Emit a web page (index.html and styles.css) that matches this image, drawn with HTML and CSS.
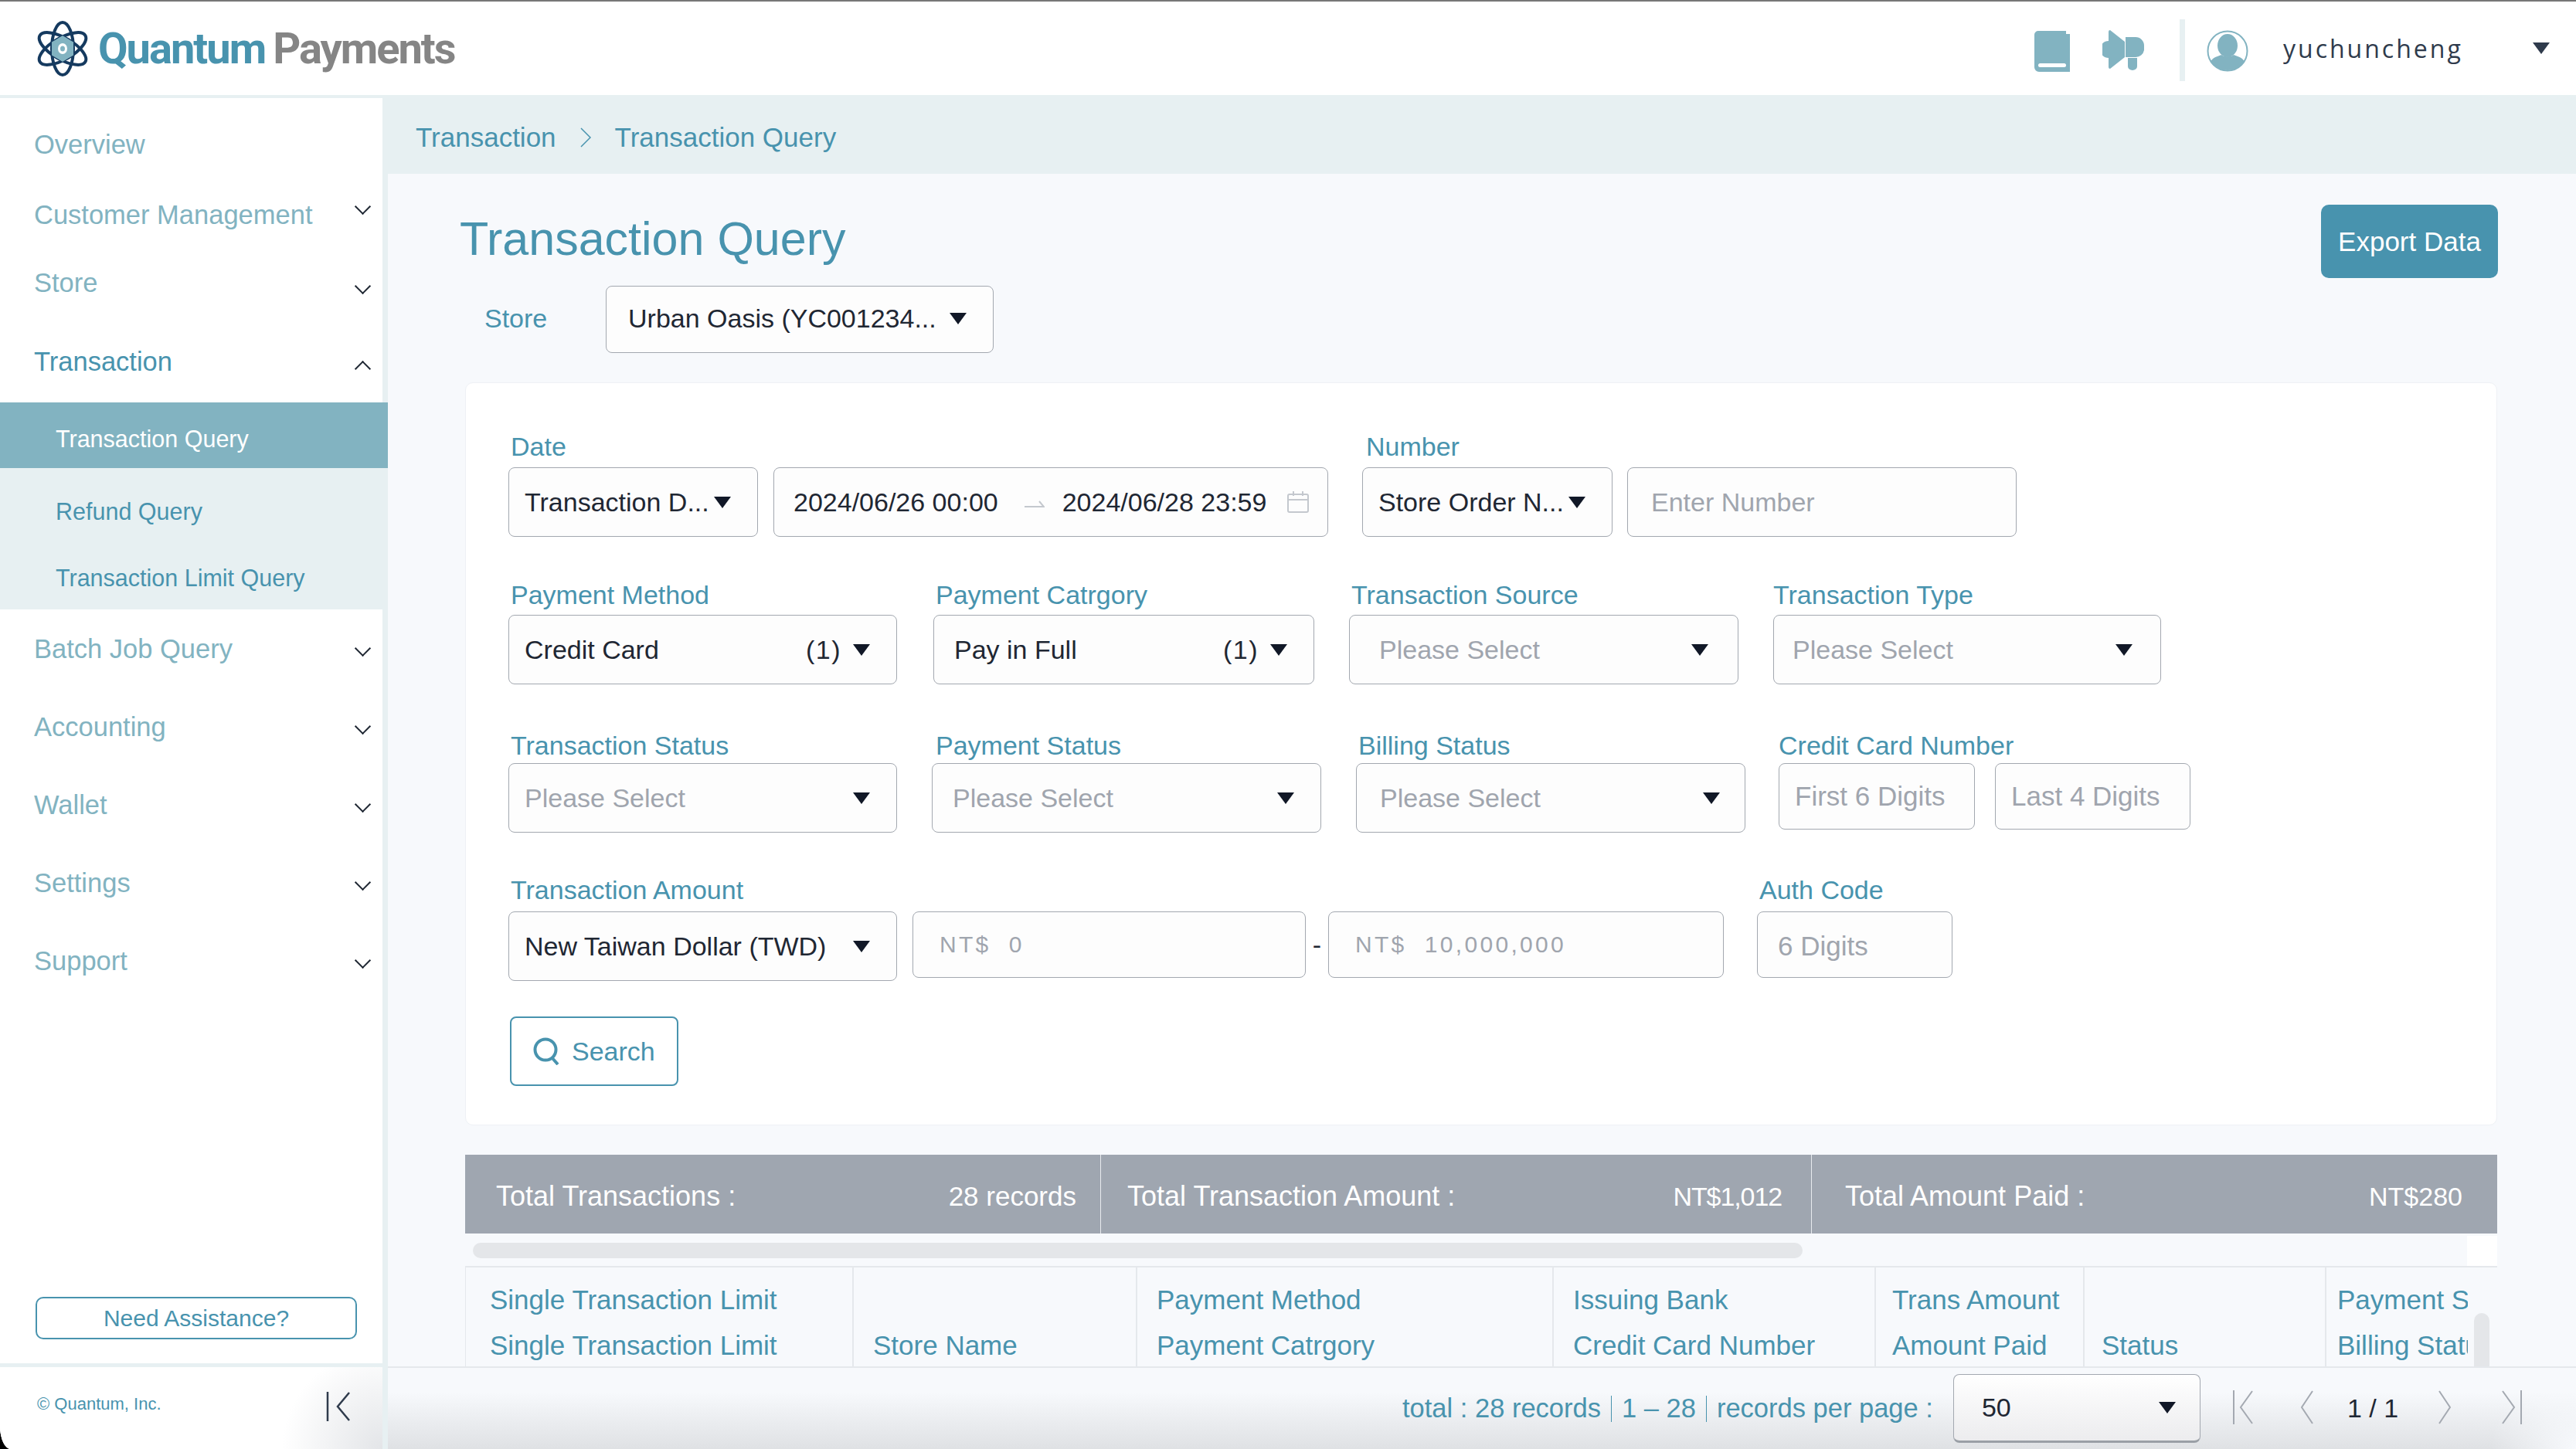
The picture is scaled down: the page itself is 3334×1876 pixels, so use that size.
FILE: index.html
```html
<!DOCTYPE html>
<html lang="en">
<head>
  <meta charset="UTF-8">
  <title>Quantum Payments - Transaction Query</title>
  <link rel="stylesheet" href="styles.css">
</head>
<body>
  <div class="app">

    <!-- top bar -->
    <header class="topbar">
      <div class="logo">
        <svg class="logo-mark" viewBox="0 0 68 74" fill="none">
          <g stroke="#153a5f" stroke-width="4">
            <ellipse cx="34" cy="37" rx="14" ry="34"/>
            <ellipse cx="34" cy="37" rx="14" ry="34" transform="rotate(60 34 37)"/>
            <ellipse cx="34" cy="37" rx="14" ry="34" transform="rotate(120 34 37)"/>
          </g>
          <path d="M34 20l14 8.500v17L34 54l-14-8.500v-17z" fill="#82b3c1"/>
          <ellipse cx="34" cy="37" rx="6" ry="7" fill="#fff"/>
          <ellipse cx="34" cy="37" rx="3" ry="3.500" fill="#82b3c1"/>
        </svg>
        <span class="logo-a">Quantum</span><span class="logo-b">Payments</span>
      </div>
      <div class="top-actions">
        <svg class="icon-book" viewBox="0 0 46 53">
          <path d="M5 0h36v39H9a5 5 0 0 0-5 5v1H0V5a5 5 0 0 1 5-5z" fill="#82b3c1"/>
          <path d="M43 4h3v49H6a6 6 0 0 1-6-6v-5a6 6 0 0 1 6-6h34v-32z" fill="#82b3c1"/>
          <rect x="5" y="42" width="36" height="5" rx="2.500" fill="#fff"/>
        </svg>
        <svg class="icon-horn" viewBox="0 0 54 52">
          <path d="M10 0l19 15v20L10 50a2 2 0 0 1-2-2V36A11 11 0 0 1 8 14V2a2 2 0 0 1 2-2z" fill="#82b3c1"/>
          <path d="M30 9h13a11 11 0 0 1 11 11v6a11 11 0 0 1-11 9H30z" fill="#82b3c1"/>
          <path d="M33 36h12v11a6 5 0 0 1-12 0z" fill="#82b3c1"/>
        </svg>
        <div class="top-divider"></div>
        <svg class="icon-user" viewBox="0 0 54 54" fill="none">
          <circle cx="27" cy="27" r="25.500" stroke="#82b3c1" stroke-width="2"/>
          <ellipse cx="27" cy="20" rx="13" ry="15" fill="#82b3c1"/>
          <path d="M5 41c3-6 9-7 14-9 3 3 13 3 16 0 5 2 11 3 14 9-5 7-13 11-22 11S10 48 5 41z" fill="#82b3c1"/>
        </svg>
        <span class="username">yuchuncheng</span>
        <span class="caret caret-user"></span>
      </div>
    </header>

    <!-- side menu -->
    <aside class="sidebar">
      <nav class="nav">
        <div class="nav-item nav-first">Overview</div>
        <div class="nav-item nav-customer">Customer Management<span class="chev chev-up-2"></span></div>
        <div class="nav-item nav-store">Store<span class="chev chev-down-2"></span></div>
        <div class="nav-item nav-open">Transaction<span class="chev chev-open"></span></div>
        <div class="subnav">
          <div class="sub-item sub-active">Transaction Query</div>
          <div class="sub-item">Refund Query</div>
          <div class="sub-item sub-last">Transaction Limit Query</div>
        </div>
        <div class="nav-item">Batch Job Query<span class="chev"></span></div>
        <div class="nav-item">Accounting<span class="chev"></span></div>
        <div class="nav-item">Wallet<span class="chev"></span></div>
        <div class="nav-item">Settings<span class="chev"></span></div>
        <div class="nav-item">Support<span class="chev"></span></div>
      </nav>
      <button class="help-btn">Need Assistance?</button>
      <div class="side-foot">
        <span class="copyright">© Quantum, Inc.</span>
        <svg class="icon-collapse" viewBox="0 0 32 38" fill="none" stroke="#2f3b4c" stroke-width="2.500">
          <path d="M2 0v38"/>
          <path d="M30 1L15 19l15 18"/>
        </svg>
      </div>
    </aside>

    <main class="main">
      <div class="breadcrumb">
        <span>Transaction</span>
        <svg class="crumb-sep" viewBox="0 0 16 26" fill="none" stroke="#4893ae" stroke-width="1.500"><path d="M2 1l12 12L2 25"/></svg>
        <span>Transaction Query</span>
      </div>

      <div class="content">
        <div class="title-row">
          <h1 class="title">Transaction Query</h1>
          <button class="export-btn">Export Data</button>
        </div>

        <div class="store-row">
          <span class="store-label">Store</span>
          <div class="ctl store-select"><span>Urban Oasis (YC001234...</span><span class="caret"></span></div>
        </div>

        <section class="filters">
          <div class="row row-1">
            <div class="field">
              <label>Date</label>
              <div class="pair pair-date">
                <div class="ctl w-323 tight"><span>Transaction D...</span><span class="caret"></span></div>
                <div class="ctl w-718 range">
                  <span>2024/06/26 00:00</span>
                  <svg class="range-arrow" viewBox="0 0 26 10" fill="none" stroke="#c4c8ce" stroke-width="2"><path d="M0 8h25L19 1"/></svg>
                  <span>2024/06/28 23:59</span>
                  <svg class="icon-cal" viewBox="0 0 28 28" fill="none" stroke="#c4c8ce" stroke-width="2">
                    <rect x="1" y="4" width="26" height="23" rx="2"/><path d="M1 11h26M8 0v6M20 0v6"/>
                  </svg>
                </div>
              </div>
            </div>
            <div class="field">
              <label class="wide">Number</label>
              <div class="pair pair-number">
                <div class="ctl w-324 tight"><span>Store Order N...</span><span class="caret"></span></div>
                <div class="ctl w-504 ph input-pad">Enter Number</div>
              </div>
            </div>
          </div>

          <div class="row row-2">
            <div class="field w-503"><label>Payment Method</label>
              <div class="ctl"><span>Credit Card</span><span class="count">(1)</span><span class="caret"></span></div></div>
            <div class="field w-493 nudge-2"><label>Payment Catrgory</label>
              <div class="ctl pad-26"><span>Pay in Full</span><span class="count">(1)</span><span class="caret"></span></div></div>
            <div class="field w-504"><label>Transaction Source</label>
              <div class="ctl ph pad-38"><span>Please Select</span><span class="caret"></span></div></div>
            <div class="field w-502"><label class="flush">Transaction Type</label>
              <div class="ctl ph pad-24"><span>Please Select</span><span class="caret"></span></div></div>
          </div>

          <div class="row row-3">
            <div class="field w-503"><label>Transaction Status</label>
              <div class="ctl ph"><span>Please Select</span><span class="caret"></span></div></div>
            <div class="field w-504"><label class="wide">Payment Status</label>
              <div class="ctl ph pad-26"><span>Please Select</span><span class="caret"></span></div></div>
            <div class="field w-504"><label>Billing Status</label>
              <div class="ctl ph pad-30"><span>Please Select</span><span class="caret"></span></div></div>
            <div class="field nudge-neg"><label class="flush">Credit Card Number</label>
              <div class="pair pair-card">
                <div class="ctl w-254 ph thin digits">First 6 Digits</div>
                <div class="ctl w-253 ph thin digits">Last 4 Digits</div>
              </div>
            </div>
          </div>

          <div class="row row-4">
            <div class="field"><label>Transaction Amount</label>
              <div class="pair pair-amount">
                <div class="ctl w-503"><span>New Taiwan Dollar (TWD)</span><span class="caret"></span></div>
                <div class="ctl w-509 ph amount thin">NT$&nbsp; 0</div>
                <span class="dash">-</span>
                <div class="ctl w-512 ph amount thin">NT$&nbsp; 10,000,000</div>
              </div>
            </div>
            <div class="field nudge-neg"><label>Auth Code</label>
              <div class="ctl w-253 ph thin digits auth">6 Digits</div></div>
          </div>

          <button class="search-btn">
            <svg class="icon-search" viewBox="0 0 34 36" fill="none" stroke="#4893ae" stroke-width="4">
              <circle cx="16" cy="16" r="13.500"/><path d="M24 26l8 9"/>
            </svg>
            Search
          </button>
        </section>

        <div class="stats">
          <div class="stat stat-1"><span class="stat-name">Total Transactions :</span><span class="stat-count">28 records</span></div>
          <div class="stat stat-2"><span class="stat-name">Total Transaction Amount :</span><span class="stat-small">NT$1,012</span></div>
          <div class="stat stat-3"><span class="stat-name">Total Amount Paid :</span><span>NT$280</span></div>
        </div>

        <div class="hscroll">
          <div class="hscroll-thumb"></div>
          <div class="hscroll-corner"></div>
        </div>

        <div class="table-wrap">
          <div class="table">
            <div class="th c1"><span>Single Transaction Limit</span><span>Single Transaction Limit</span></div>
            <div class="th c2"><span>&nbsp;</span><span>Store Name</span></div>
            <div class="th c3"><span>Payment Method</span><span>Payment Catrgory</span></div>
            <div class="th c4"><span>Issuing Bank</span><span>Credit Card Number</span></div>
            <div class="th c5"><span>Trans Amount</span><span>Amount Paid</span></div>
            <div class="th c6"><span>&nbsp;</span><span>Status</span></div>
            <div class="th c7"><span>Payment Status</span><span>Billing Status</span></div>
          </div>
          <div class="vscroll"></div>
        </div>
      </div>

      <footer class="pager">
        <span class="pager-text">total : 28 records</span><span class="pager-bar"></span>
        <span class="pager-text">1 – 28</span><span class="pager-bar"></span>
        <span class="pager-text">records per page :</span>
        <div class="ctl page-size"><span>50</span><span class="caret"></span></div>
        <svg class="pg pg-edge" viewBox="0 0 26 44" fill="none" stroke="#a4a9b1" stroke-width="2"><path d="M1 0v44M25 1L10 22l15 21"/></svg>
        <svg class="pg pg-arrow" viewBox="0 0 16 44" fill="none" stroke="#a4a9b1" stroke-width="2"><path d="M15 1L1 22l14 21"/></svg>
        <span class="pg-count">1 / 1</span>
        <svg class="pg pg-arrow" viewBox="0 0 16 44" fill="none" stroke="#a4a9b1" stroke-width="2"><path d="M1 1l14 21L1 43"/></svg>
        <svg class="pg pg-edge pg-last" viewBox="0 0 26 44" fill="none" stroke="#a4a9b1" stroke-width="2"><path d="M25 0v44M1 1l15 21L1 43"/></svg>
      </footer>
    </main>
  </div>
</body>
</html>
```

FILE: styles.css
```css
* {
  box-sizing: border-box;
}
html, body {
  margin: 0;
  height: 100%;
  background: #000;
}
body {
  font-family: "Liberation Sans", Arial, sans-serif;
  font-size: 34px;
  color: #1f2733;
  overflow: hidden;
}
.app {
  width: 3334px;
  height: 1876px;
  display: grid;
  grid-template-columns: 502px 1fr;
  grid-template-rows: 123px 1fr;
  background: #f7f9fc;
  border-bottom-left-radius: 14px 30px;
  overflow: hidden;
}

/* top bar */
.topbar {
  grid-column: 1 / 3;
  display: flex;
  align-items: center;
  justify-content: space-between;
  background: #fff;
  border-top: 2px solid #777;
}
.logo {
  display: flex;
  align-items: center;
  padding-left: 47px;
  font-family: Roboto, sans-serif;
  font-weight: 700;
  font-size: 56px;
  letter-spacing: -2px;
}
.logo-mark {
  width: 68px;
  height: 74px;
  margin-right: 12px;
}
.logo-a {
  color: #4893ae;
  margin-right: 10px;
}
.logo-b {
  color: #858585;
}
.top-actions {
  display: flex;
  align-items: center;
}
.icon-book {
  width: 46px;
  height: 53px;
  margin-top: 8px;
}
.icon-horn {
  width: 54px;
  height: 52px;
  margin-left: 42px;
  margin-top: 5px;
}
.top-divider {
  width: 7px;
  height: 80px;
  background: #e7f0f2;
  margin: 4px 28px 0 46px;
}
.icon-user {
  width: 54px;
  height: 54px;
  margin-top: 7px;
}
.username {
  font-family: "Open Sans", sans-serif;
  font-size: 32px;
  letter-spacing: 3px;
  color: #2f3b4c;
  margin-left: 45px;
  width: 323px;
}
.caret {
  flex: none;
  width: 0;
  height: 0;
  border-left: 11px solid transparent;
  border-right: 11px solid transparent;
  border-top: 15px solid #111827;
}
.caret-user {
  border-top-color: #2f3b4c;
  margin-right: 34px;
}

/* side menu */
.sidebar {
  display: flex;
  flex-direction: column;
  background: #fff;
  border-top: 4px solid #e7f0f2;
  border-right: 7px solid #e7f0f2;
}
.nav {
  flex: 1;
  padding-top: 12px;
  font-size: 34.500px;
}
.nav-item {
  display: flex;
  align-items: center;
  justify-content: space-between;
  height: 101px;
  padding: 0 15px 0 44px;
  color: #82b3c1;
}
.nav-first {
  height: 94px;
  padding-top: 3px;
}
.nav-customer {
  height: 90px;
}
.nav-store {
  height: 86px;
}
.nav-open {
  height: 112px;
  padding-top: 6px;
  color: #4893ae;
}
.chev {
  width: 15px;
  height: 15px;
  margin-right: 3px;
  margin-top: -2px;
  border-right: 2px solid #1f2733;
  border-bottom: 2px solid #1f2733;
  transform: rotate(45deg);
}
.chev-up-2 {
  margin-top: -22px;
}
.chev-down-2 {
  margin-top: 8px;
}
.chev-open {
  transform: rotate(225deg);
  margin-top: 18px;
}
.subnav {
  height: 268px;
  margin-right: -7px;
  margin-bottom: 1px;
  background: #e7f0f2;
  position: relative;
}
.sub-item {
  display: flex;
  align-items: center;
  height: 90px;
  padding-left: 72px;
  font-size: 30.500px;
  color: #4893ae;
}
.sub-active {
  height: 85px;
  margin-bottom: 11px;
  padding-top: 10px;
  background: #82b3c1;
  color: #fff;
}
.sub-last {
  height: 82px;
}
.help-btn {
  width: 416px;
  height: 55px;
  margin: 0 0 31px 46px;
  background: #fff;
  border: 2px solid #4893ae;
  border-radius: 10px;
  color: #4893ae;
  font: inherit;
  font-size: 30px;
}
.side-foot {
  display: flex;
  align-items: center;
  justify-content: space-between;
  height: 111px;
  padding: 0 41px 10px 48px;
  border-top: 5px solid #e7f0f2;
  background: radial-gradient(circle at 100% 100%, #e3e5e8 0, #fff 130px);
}
.copyright {
  font-size: 22px;
  color: #4893ae;
}
.icon-collapse {
  width: 32px;
  height: 38px;
  margin-top: 6px;
}

/* main column */
.main {
  display: flex;
  flex-direction: column;
  min-height: 0;
}
.breadcrumb {
  display: flex;
  align-items: center;
  flex: none;
  height: 102px;
  padding: 7px 0 0 36px;
  background: #e7f0f2;
  color: #4893ae;
  font-size: 35px;
}
.crumb-sep {
  width: 16px;
  height: 26px;
  margin: 0 30px;
}
.content {
  flex: 1;
  min-height: 0;
  overflow: hidden;
  padding: 40px 102px 0 100px;
}
.title-row {
  display: flex;
  align-items: center;
  justify-content: space-between;
  height: 95px;
}
.title {
  margin: -8px 0 0 -7px;
  font-size: 61px;
  font-weight: 400;
  color: #4893ae;
}
.export-btn {
  width: 229px;
  height: 95px;
  margin-right: -1px;
  background: #4893ae;
  border: none;
  border-radius: 10px;
  color: #fff;
  font: inherit;
  font-size: 35px;
}
.store-row {
  display: flex;
  align-items: center;
  margin-top: 10px;
}
.store-label {
  width: 182px;
  padding-left: 25px;
  padding-bottom: 3px;
  color: #4893ae;
}

/* controls */
.ctl {
  display: flex;
  align-items: center;
  justify-content: space-between;
  height: 90px;
  padding: 0 34px 0 20px;
  background: #fdfdfd;
  border: 1.500px solid #a3a8b0;
  border-radius: 8px;
  white-space: nowrap;
}
.store-select {
  width: 502px;
  height: 87px;
  padding: 0 34px 3px 28px;
}
.ph {
  color: #a0a5ae;
}
.tight {
  justify-content: flex-start;
  gap: 6px;
  padding-right: 10px;
}
.input-pad {
  padding-left: 30px;
}
.pad-26 {
  padding: 0 34px 0 26px;
}
.pad-38 {
  padding: 0 38px 0 38px;
}
.pad-24 {
  padding: 0 36px 0 24px;
}
.pad-30 {
  padding: 0 32px 0 30px;
}
.count {
  margin-left: auto;
  margin-right: 15px;
  letter-spacing: 1.500px;
}
.thin {
  height: 86px;
}
.digits {
  font-size: 35px;
}
.auth {
  padding-left: 26px;
  padding-top: 4px;
}
.range {
  padding: 0 24px 0 25px;
  justify-content: flex-start;
}
.range-arrow {
  width: 26px;
  height: 10px;
  margin: 6px 23px 0 34px;
}
.icon-cal {
  width: 28px;
  height: 28px;
  margin-left: auto;
}
.amount {
  padding-left: 34px;
  font-size: 30px;
  letter-spacing: 3.300px;
}

/* filter card */
.filters {
  height: 962px;
  margin-top: 38px;
  padding: 0 0 0 55px;
  background: #fff;
  border: 1px solid #eef1f5;
  border-radius: 10px;
}
.row {
  display: flex;
  gap: 45px;
}
.row-1 {
  margin-top: 62px;
  gap: 44px;
}
.row-2 {
  margin-top: 55px;
}
.row-3 {
  margin-top: 59px;
}
.row-4 {
  margin-top: 54px;
}
.field label {
  display: block;
  height: 40px;
  line-height: 40px;
  padding-left: 3px;
  color: #4893ae;
}
.field label.flush {
  padding-left: 0;
}
.field label.wide {
  padding-left: 5px;
}
.row-1 label {
  margin-bottom: 7px;
}
.row-2 label {
  margin-bottom: 6px;
}
.row-3 label {
  margin-bottom: 3px;
}
.row-4 label {
  margin-bottom: 8px;
}
.pair {
  display: flex;
  align-items: flex-start;
}
.pair-date {
  gap: 20px;
}
.pair-number {
  gap: 19px;
}
.pair-card {
  gap: 26px;
}
.pair-amount {
  gap: 20px;
}
.dash {
  width: 29px;
  margin-left: -20px;
  margin-right: -20px;
  line-height: 86px;
  text-align: center;
}
.nudge-2 {
  margin-left: 2px;
}
.nudge-neg {
  margin-left: -2px;
}
.w-253 { width: 253px; }
.w-254 { width: 254px; }
.w-323 { width: 323px; }
.w-324 { width: 324px; }
.w-493 { width: 493px; }
.w-502 { width: 502px; }
.w-503 { width: 503px; }
.w-504 { width: 504px; }
.w-509 { width: 509px; }
.w-512 { width: 512px; }
.w-718 { width: 718px; }
.search-btn {
  display: flex;
  align-items: center;
  width: 218px;
  height: 90px;
  margin-top: 46px;
  margin-left: 2px;
  padding: 0 0 0 28px;
  background: #fff;
  border: 2px solid #4893ae;
  border-radius: 8px;
  color: #4893ae;
  font: inherit;
}
.icon-search {
  width: 34px;
  height: 36px;
  margin-right: 16px;
}

/* totals */
.stats {
  display: grid;
  grid-template-columns: 822px 920px 1fr;
  height: 102px;
  margin-top: 38px;
  background: #9fa6b0;
  color: #fff;
}
.stat {
  display: flex;
  align-items: center;
  justify-content: space-between;
  padding-top: 6px;
}
.stat-name {
  font-size: 36px;
}
.stat-count {
  font-size: 35px;
}
.stat-small {
  letter-spacing: -1.100px;
}
.stat-1 {
  padding-left: 40px;
  padding-right: 31px;
}
.stat-2 {
  padding-left: 34px;
  padding-right: 38px;
  border-left: 1px solid #e7eaee;
}
.stat-3 {
  padding-left: 43px;
  padding-right: 45px;
  border-left: 1px solid #e7eaee;
}
.hscroll {
  position: relative;
  height: 42px;
  padding: 12px 0 0 10px;
}
.hscroll-thumb {
  width: 1721px;
  height: 20px;
  background: #e4e6e9;
  border-radius: 10px;
}
.hscroll-corner {
  position: absolute;
  top: 3px;
  right: 0;
  width: 39px;
  height: 39px;
  background: #fff;
}

/* table header */
.table-wrap {
  position: relative;
}
.table {
  display: grid;
  grid-template-columns: 502px 367px 539px 417px 270px 313px 183px;
  height: 140px;
  border-top: 2px solid #e5e8ec;
  border-left: 1px solid #e5e8ec;
  font-size: 35px;
}
.th {
  display: flex;
  flex-direction: column;
  gap: 19px;
  padding: 22px 0 0 31px;
  border-right: 2px solid #e5e8ec;
  color: #4893ae;
  white-space: nowrap;
  overflow: hidden;
}
.th span {
  line-height: 40px;
}
.c1 {
  padding-left: 31px;
}
.c2, .c3, .c4 {
  padding-left: 25px;
}
.c5 {
  padding-left: 21px;
}
.c6 {
  padding-left: 22px;
}
.c7 {
  padding-left: 14px;
  border-right: none;
}
.vscroll {
  position: absolute;
  top: 61px;
  right: 10px;
  width: 20px;
  height: 80px;
  background: #e4e6e9;
  border-radius: 10px 10px 0 0;
}

/* pager */
.pager {
  display: flex;
  align-items: center;
  flex: none;
  height: 107px;
  padding-left: 1313px;
  background:
    radial-gradient(circle at 100% 100%, #f7f9fc 0, rgba(247, 249, 252, 0) 110px),
    linear-gradient(#f7f9fc 30%, #dfe1e4 100%);
  border-top: 2px solid #e5e8ec;
  color: #4893ae;
  font-size: 34.500px;
}
.pager-bar {
  width: 1px;
  height: 34px;
  margin: 0 13px;
  background: #4893ae;
}
.page-size {
  width: 320px;
  height: 89px;
  margin-left: 26px;
  padding: 0 31px 0 36px;
  background: linear-gradient(#fff, #ececee);
  border-bottom: 3px solid #9a9fa6;
  color: #1f2733;
  font-size: 34px;
}
.pg {
  height: 44px;
  margin-top: -4px;
}
.pg-edge {
  width: 26px;
  margin-left: 42px;
}
.pg-arrow {
  width: 16px;
  margin-left: 62px;
}
.pg-count {
  width: 70px;
  margin-left: 44px;
  color: #1f2733;
  font-size: 34px;
  white-space: nowrap;
}
.pg-count + .pg-arrow {
  margin-left: 48px;
}
.pg-last {
  margin-left: 66px;
}
```
